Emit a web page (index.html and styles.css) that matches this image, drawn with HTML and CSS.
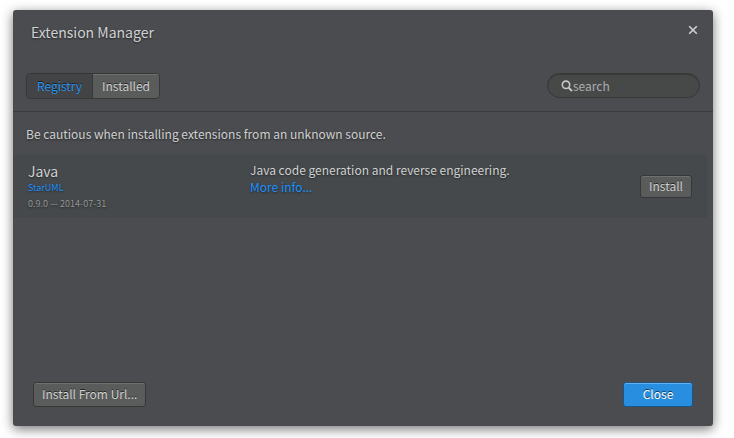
FILE: index.html
```html
<!DOCTYPE html>
<html lang="en">
<head>
<meta charset="utf-8">
<title>Extension Manager</title>
<link rel="stylesheet" href="styles.css">
</head>
<body>
<div class="modal" role="dialog" aria-labelledby="title">
<div class="modal-header">
<h1 id="title">Extension Manager</h1>
<button type="button" class="close" aria-label="Close dialog">
<svg width="10" height="10" viewBox="0 0 10 10"><path d="M1.2 1.2 8.8 8.8M8.8 1.2 1.2 8.8" fill="none" stroke="#d0d1d2" stroke-width="1.6"/></svg>
</button>
</div>

<div class="toolbar">
<div class="tabs">
<button type="button" class="tab on">Registry</button>
<button type="button" class="tab">Installed</button>
</div>
<label class="search">
<svg width="12" height="12" viewBox="0 0 12 12"><circle cx="5" cy="4.8" r="3.7" fill="none" stroke="#c6c7c6" stroke-width="1.6"/><path d="M7.6 7.6 11 11" stroke="#c6c7c6" stroke-width="2"/></svg>
<input type="text" placeholder="search" aria-label="search">
</label>
</div>

<div class="modal-body">
<p class="message">Be cautious when installing extensions from an unknown source.</p>
<div class="extension">
<div class="info">
<h2>Java</h2>
<a href="#" class="author">StarUML</a>
<span class="version">0.9.0 — 2014-07-31</span>
</div>
<div class="description">
<p>Java code generation and reverse engineering.</p>
<a href="#">More info...</a>
</div>
<button type="button" class="btn small">Install</button>
</div>
</div>

<div class="modal-footer">
<button type="button" class="btn">Install From Url...</button>
<button type="button" class="btn primary">Close</button>
</div>
</div>
</body>
</html>
```
FILE: styles.css
```css
*{
box-sizing:border-box;
}
body{
margin:0;
padding:10px 21px 12px 13px;
background:#fff;
color:#d0d1d2;
font:12px/17px "Noto Sans CJK SC", "Noto Sans", sans-serif;
}
h1, h2, p{
margin:0;
font-weight:normal;
}
a{
color:#1a92ff;
text-decoration:none;
}
button, input{
font:inherit;
color:inherit;
}
button{
cursor:pointer;
}

.modal{
display:flex;
flex-direction:column;
min-height:416px;
background:#4b4c4f;
border-radius:3px;
box-shadow:0 3px 12px rgba(0,0,0,.55);
text-shadow:0 1px 2px rgba(0,0,0,.5);
}
.modal-header{
display:flex;
justify-content:space-between;
align-items:flex-start;
padding:12px 15px 0 18px;
height:63px;
}
.modal-header h1{
font-size:14px;
line-height:20px;
}
.close{
display:flex;
padding:3px 0;
border:0;
background:none;
}

.toolbar{
display:flex;
justify-content:space-between;
padding:0 13px 12px;
border-bottom:1px solid #3a3b3d;
}
.tabs{
display:flex;
height:26px;
border:1px solid #363837;
border-radius:4px;
overflow:hidden;
}
.tab{
width:66px;
padding:0 0 2px;
border:0;
background:#5a5c5b;
box-shadow:inset 0 1px 0 #6e706f;
text-shadow:0 -1px 0 rgba(0,0,0,.6);
}
.tab.on{
background:#434445;
border-right:1px solid #363837;
box-shadow:none;
color:#2a93ee;
}
.search{
display:flex;
align-items:center;
width:153px;
height:25px;
padding:0 14px 0 13px;
background:#474949;
border:1px solid #363837;
border-radius:13px;
box-shadow:inset 0 1px 1px rgba(0,0,0,.2);
}
.search svg{
flex:none;
}
.search input{
width:100%;
padding:0;
border:0;
outline:0;
background:none;
}
.search input::placeholder{
color:#acaeae;
opacity:1;
}

.modal-body{
flex:1;
}
.message{
padding:13px;
}
.extension{
display:flex;
align-items:center;
margin-right:6px;
padding:6px 15px;
background:#46494b;
}
.info{
display:flex;
flex-direction:column;
width:222px;
font-size:9px;
}
.info h2{
font-size:14px;
line-height:20px;
}
.author{
line-height:14px;
}
.version{
color:#939596;
}
.description{
flex:1;
align-self:flex-start;
}

.btn{
height:25px;
padding:0 8px 2px;
background:#5a5c5b;
border:1px solid #363837;
border-radius:3px;
box-shadow:inset 0 1px 0 #6e706f;
text-shadow:0 -1px 0 rgba(0,0,0,.6);
}
.btn.small{
height:23px;
}
.btn.primary{
min-width:70px;
background:#288edf;
border-color:#1a5488;
box-shadow:inset 0 1px 0 #69b0e9;
color:#fff;
}
.modal-footer{
display:flex;
justify-content:space-between;
padding:0 20px 19px;
}
```
